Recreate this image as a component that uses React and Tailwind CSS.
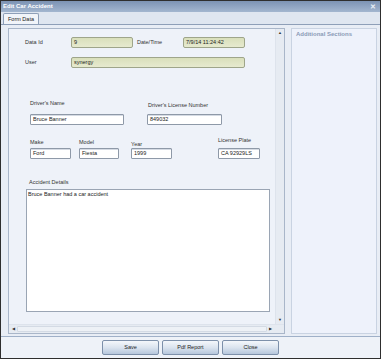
import React from "react";

const font = { fontFamily: '"Liberation Sans", Arial, sans-serif' };

const ReadOnly = ({ value, className }) => (
  <div className={`h-[11px] rounded-[2px] border border-[#9ea58a] bg-gradient-to-b from-[#d9dfbb] to-[#e6eacf] px-[2px] text-[5.5px] leading-[9px] text-[#222] ${className}`}>
    {value}
  </div>
);

const TextBox = ({ value, className }) => (
  <div className={`h-[11px] rounded-[1px] border border-[#8e99a8] bg-white px-[2px] text-[5.5px] leading-[9px] text-[#222] shadow-[inset_0_1px_0_#d5dbe4] ${className}`}>
    {value}
  </div>
);

const Label = ({ children, className = "" }) => (
  <div className={`text-[5.5px] leading-[7px] text-[#333] ${className}`}>{children}</div>
);

const Button = ({ children }) => (
  <button className="h-[15px] w-[57px] rounded-[2px] border border-[#7d90aa] bg-gradient-to-b from-[#f4f7fb] via-[#dbe4ef] to-[#b6c7dc] text-[5.5px] text-[#222]">
    {children}
  </button>
);

export default function App() {
  return (
    <div style={font} className="flex h-[359px] w-[381px] flex-col border border-[#2e2e2e] bg-[#dfe6f0]">
      {/* title bar */}
      <div className="flex h-[11px] items-center justify-between bg-gradient-to-b from-[#7c93b4] to-[#a3b6cf] px-[2px]">
        <span className="text-[6px] font-bold text-white">Edit Car Accident</span>
        <span className="pr-[2px] text-[7px] font-bold leading-none text-[#e8eef6]">✕</span>
      </div>

      {/* tabs */}
      <div className="flex h-[12px] items-end bg-[#dfe6f0] pl-[2px]">
        <div className="-mb-px flex h-[12px] w-[36px] items-center justify-center rounded-t-[2px] border border-b-0 border-[#8e9fb8] bg-[#f1f4f9] text-[5.5px] text-[#222]">
          Form Data
        </div>
      </div>

      {/* content */}
      <div className="flex flex-1 gap-[6px] border-t border-[#8e9fb8] bg-[#e8edf5] pl-[7px] pr-[3px] pt-[3px] pb-[2px]">
        {/* left scroll panel */}
        <div className="flex w-[277px] flex-col border border-[#a9b6c9] bg-[#eef2f9]">
          <div className="flex flex-1">
            <div className="flex-1 pt-[8px]">
              {/* row 1 */}
              <div className="flex items-center pl-[16px]">
                <Label className="w-[46px]">Data Id</Label>
                <ReadOnly value="9" className="w-[62px]" />
                <Label className="ml-[4px] w-[46px]">Date/Time</Label>
                <ReadOnly value="7/9/14 11:24:42" className="w-[62px]" />
              </div>
              {/* row 2 */}
              <div className="mt-[9px] flex items-center pl-[16px]">
                <Label className="w-[46px]">User</Label>
                <ReadOnly value="synergy" className="w-[174px]" />
              </div>
              {/* row 3 */}
              <div className="mt-[32px] flex pl-[21px]">
                <div className="w-[117px]">
                  <Label>Driver&apos;s Name</Label>
                  <TextBox value="Bruce Banner" className="mt-[7px] w-[94px]" />
                </div>
                <div>
                  <Label className="mt-[2px] pl-[1px]">Driver&apos;s License Number</Label>
                  <TextBox value="849032" className="mt-[5px] w-[75px]" />
                </div>
              </div>
              {/* row 4 */}
              <div className="mt-[12px] flex items-end pl-[21px]">
                <div className="w-[49px]">
                  <Label>Make</Label>
                  <TextBox value="Ford" className="mt-[2px] w-[41px]" />
                </div>
                <div className="w-[52px]">
                  <Label>Model</Label>
                  <TextBox value="Fiesta" className="mt-[2px] w-[40px]" />
                </div>
                <div className="w-[87px]">
                  <Label>Year</Label>
                  <TextBox value="1999" className="w-[41px]" />
                </div>
                <div>
                  <Label>License Plate</Label>
                  <TextBox value="CA 92929LS" className="mt-[4px] w-[42px]" />
                </div>
              </div>
              {/* row 5 */}
              <div className="mt-[20px] pl-[17px]">
                <Label className="pl-[3px]">Accident Details</Label>
                <div className="mt-[3px] h-[123px] w-[244px] border border-[#9aa5b4] bg-white text-[5.5px] leading-[8px] text-[#222]">
                  <span className="pl-[1px]">Bruce Banner had a car accident</span>
                </div>
              </div>
            </div>
            {/* vertical scrollbar */}
            <div className="flex w-[9px] flex-col items-center justify-between border-l border-[#dde3ec] bg-[#e6ebf2] py-[2px]">
              <span className="text-[4px] leading-none text-[#333]">▲</span>
              <span className="text-[4px] leading-none text-[#333]">▼</span>
            </div>
          </div>
          {/* horizontal scrollbar */}
          <div className="flex h-[9px] items-center justify-between border-t border-[#dde3ec] bg-[#e6ebf2] pl-[3px] pr-[12px]">
            <span className="text-[4px] leading-none text-[#333]">◀</span>
            <div className="mx-[2px] h-[6px] flex-1 rounded-[1px] border border-[#d3dae4] bg-[#edf1f6]" />
            <span className="text-[4px] leading-none text-[#333]">▶</span>
          </div>
        </div>

        {/* right panel */}
        <div className="flex-1 border border-[#c9d3e2] bg-[#eef2fb] px-[4px] pt-[1px]">
          <div className="text-[6px] font-bold text-[#8a9ab6]">Additional Sections</div>
        </div>
      </div>

      {/* buttons */}
      <div className="flex h-[22px] items-center justify-center gap-[3px] border-t border-[#9fb0c8] bg-[#eef2f8]">
        <Button>Save</Button>
        <Button>Pdf Report</Button>
        <Button>Close</Button>
      </div>
    </div>
  );
}
